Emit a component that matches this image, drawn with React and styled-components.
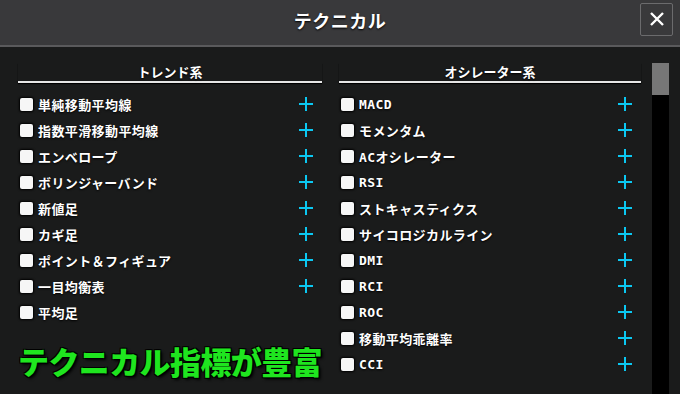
import React from 'react';
import styled, { createGlobalStyle } from 'styled-components';

const GlobalStyle = createGlobalStyle`
  html, body {
    margin: 0;
    padding: 0;
    background: #1a1b1b;
  }
  body {
    font-family: "DejaVu Sans Mono", "Noto Sans CJK JP", sans-serif;
  }
`;

const Frame = styled.div`
  width: 680px;
  height: 394px;
  overflow: hidden;
  background: #1a1b1b;
  display: flex;
  flex-direction: column;
  color: #fff;
`;

const TitleBar = styled.div`
  height: 45px;
  flex: none;
  background: #39393b;
  border-bottom: 2px solid #5a5a5c;
  display: grid;
  grid-template-columns: 1fr auto 1fr;
  align-items: center;
`;

const Title = styled.div`
  grid-column: 2;
  font-family: "Noto Sans CJK JP", sans-serif;
  font-weight: 700;
  font-size: 18px;
  letter-spacing: 0.5px;
  padding-bottom: 6px;
  text-shadow: 0 1px 2px #000;
`;

const CloseButton = styled.button`
  grid-column: 3;
  justify-self: end;
  margin: 0 7px 7px 0;
  width: 33px;
  height: 33px;
  padding: 0;
  border: 1.5px solid #6b6b6d;
  border-radius: 2px;
  background: transparent;
  display: flex;
  align-items: center;
  justify-content: center;
`;

const Body = styled.div`
  flex: 1;
  display: flex;
  padding: 16px 0 0 18px;
`;

const Column = styled.div`
  width: ${p => p.$w}px;
  margin-right: ${p => p.$mr}px;
  display: flex;
  flex-direction: column;
`;

const ColumnHead = styled.div`
  font-family: "Noto Sans CJK JP", sans-serif;
  font-weight: 700;
  font-size: 13px;
  text-align: center;
  height: 18px;
  line-height: 18px;
  border-bottom: 2px solid #e6e6e6;
  box-shadow: 0 1px 1px #000;
  text-shadow: 0 1px 2px #000;
`;

const List = styled.div`
  padding-top: 8px;
  display: flex;
  flex-direction: column;
`;

const Row = styled.div`
  height: 26px;
  display: flex;
  align-items: center;
  padding-left: 2px;
`;

const Box = styled.span`
  width: 13px;
  height: 13px;
  flex: none;
  background: #f6f6f6;
  border-radius: 2px;
  box-shadow: 0 0 2px 1px #000;
  margin-right: 5px;
`;

const Label = styled.span`
  flex: 1;
  font-size: 13px;
  font-weight: 700;
  letter-spacing: 0.4px;
  text-shadow: 0 1px 2px #000;
  white-space: nowrap;
`;

const Plus = styled.span`
  width: 16px;
  display: flex;
  justify-content: center;
  margin-right: 8px;
`;

const Promo = styled.div`
  margin-top: 17px;
  font-family: "Noto Sans CJK JP", sans-serif;
  font-weight: 900;
  font-size: 31px;
  line-height: 38px;
  letter-spacing: -0.6px;
  color: #1fe51f;
  white-space: nowrap;
  text-shadow: -1px -1px 0 #000, 1px -1px 0 #000, -1px 1px 0 #000, 1px 1px 0 #000, 2px 2px 3px #000;
`;

const ScrollTrack = styled.div`
  width: 17px;
  margin-left: 11px;
  background: #000;
  display: flex;
  flex-direction: column;
`;

const ScrollThumb = styled.div`
  height: 32px;
  background: #777;
`;

const PlusIcon = () => (
  <svg width="16" height="16" viewBox="0 0 16 16">
    <path d="M8 1v14M1 8h14" stroke="#0bc8f2" strokeWidth="2" />
  </svg>
);

const trend = [
  ['単純移動平均線', true],
  ['指数平滑移動平均線', true],
  ['エンベロープ', true],
  ['ボリンジャーバンド', true],
  ['新値足', true],
  ['カギ足', true],
  ['ポイント＆フィギュア', true],
  ['一目均衡表', true],
  ['平均足', false],
];

const osc = ['MACD', 'モメンタム', 'ACオシレーター', 'RSI', 'ストキャスティクス', 'サイコロジカルライン', 'DMI', 'RCI', 'ROC', '移動平均乖離率', 'CCI'];

const Item = ({ name, plus }) => (
  <Row>
    <Box />
    <Label>{name}</Label>
    {plus && <Plus><PlusIcon /></Plus>}
  </Row>
);

export default function App() {
  return (
    <Frame>
      <GlobalStyle />
      <TitleBar>
        <Title>テクニカル</Title>
        <CloseButton>
          <svg width="16" height="16" viewBox="0 0 16 16">
            <path d="M2 2l12 12M14 2L2 14" stroke="#fff" strokeWidth="2.4" />
          </svg>
        </CloseButton>
      </TitleBar>
      <Body>
        <Column $w={304} $mr={17}>
          <ColumnHead>トレンド系</ColumnHead>
          <List>
            {trend.map(([n, p]) => <Item key={n} name={n} plus={p} />)}
          </List>
          <Promo>テクニカル指標が豊富</Promo>
        </Column>
        <Column $w={302} $mr={0}>
          <ColumnHead>オシレーター系</ColumnHead>
          <List>
            {osc.map(n => <Item key={n} name={n} plus />)}
          </List>
        </Column>
        <ScrollTrack>
          <ScrollThumb />
        </ScrollTrack>
      </Body>
    </Frame>
  );
}
